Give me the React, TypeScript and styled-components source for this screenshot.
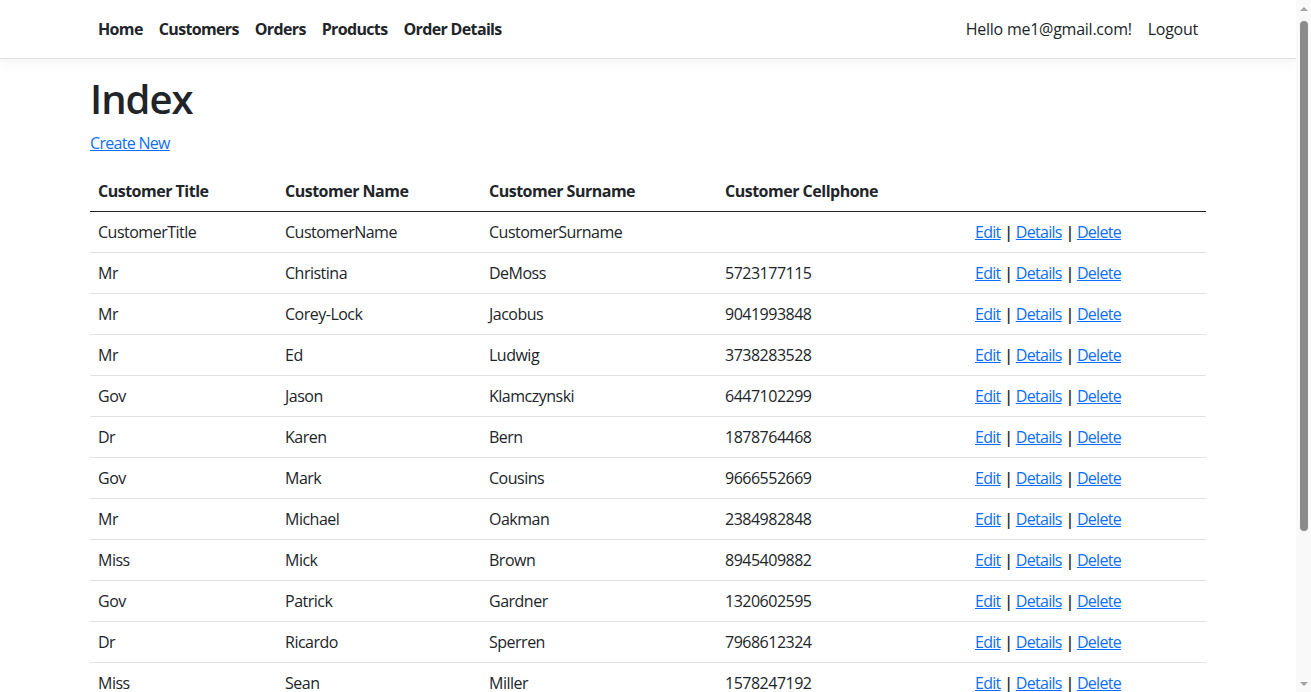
import React from "react";
import styled, { createGlobalStyle } from "styled-components";

const GlobalStyle = createGlobalStyle`
  html, body { margin: 0; padding: 0; overflow: hidden; }
  body {
    font-family: "Open Sans", "Noto Sans", sans-serif;
    font-size: 16px;
    line-height: 1.5;
    color: #212529;
    background: #fff;
  }
  * { box-sizing: border-box; }
`;

const Shell = styled.div`
  display: flex;
  height: 100vh;
  width: 100%;
  overflow: hidden;
`;

const Viewport = styled.div`
  flex: 1;
  min-width: 0;
  height: 100%;
  overflow: hidden;
`;

const ScrollBar = styled.div`
  width: 15px;
  flex: none;
  height: 100%;
  background: #f9f9f9;
  display: flex;
  flex-direction: column;
  align-items: center;
`;

const Arrow = styled.div<{ $down?: boolean }>`
  flex: none;
  height: 17px;
  width: 100%;
  display: flex;
  align-items: center;
  justify-content: center;
  &::before {
    content: "";
    width: 0;
    height: 0;
    border-left: 4px solid transparent;
    border-right: 4px solid transparent;
    ${(p) =>
      p.$down
        ? "border-top: 4px solid #a3a3a3;"
        : "border-bottom: 4px solid #a3a3a3;"}
  }
`;

const Track = styled.div`
  flex: 1;
  width: 100%;
  padding: 4px 3px 0;
`;

const Thumb = styled.div`
  width: 8px;
  margin: 0 auto;
  height: 510px;
  border-radius: 4px;
  background: #8b8b8b;
`;

const Header = styled.header`
  margin-bottom: 16px;
`;

const Navbar = styled.nav`
  height: 59px;
  background: #fff;
  border-bottom: 1px solid #dee2e6;
  box-shadow: 0 4px 12px rgba(0, 0, 0, 0.05);
  display: flex;
  align-items: center;
`;

const Container = styled.div`
  width: 1140px;
  margin: 0 auto;
  padding: 0 12px;
`;

const NavInner = styled(Container)`
  display: flex;
  align-items: center;
  justify-content: space-between;
`;

const NavList = styled.ul`
  display: flex;
  list-style: none;
  margin: 0;
  padding: 0;
  align-items: center;
`;

const NavLink = styled.a<{ $bold?: boolean }>`
  display: block;
  padding: 8px;
  color: #212529;
  text-decoration: none;
  font-weight: ${(p) => (p.$bold ? 700 : 400)};
  letter-spacing: ${(p) => (p.$bold ? "-0.65px" : "-0.25px")};
  cursor: pointer;
`;

const Title = styled.h1`
  font-size: 40px;
  font-weight: 600;
  line-height: 1.2;
  margin: 0 0 8px;
  letter-spacing: -1px;
`;

const Para = styled.p`
  margin: 0 0 16px;
`;

const Link = styled.a`
  color: #0d6efd;
  text-decoration: underline;
  letter-spacing: -0.7px;
  cursor: pointer;
`;

const Table = styled.table`
  width: 100%;
  border-collapse: collapse;
  margin-bottom: 16px;
`;

const Th = styled.th<{ $w?: number }>`
  text-align: left;
  font-weight: 700;
  padding: 8px;
  width: ${(p) => (p.$w ? `${p.$w}px` : "auto")};
  border-bottom: 1px solid #212529;
  letter-spacing: -0.5px;
`;

const Td = styled.td`
  padding: 8px;
  border-bottom: 1px solid #dee2e6;
  letter-spacing: -0.5px;
  white-space: nowrap;
`;

const Sep = styled.span`
  color: #212529;
  font-weight: 600;
  letter-spacing: -1px;
`;

const Footer = styled.footer`
  border-top: 1px solid #dee2e6;
  color: #6c757d;
  line-height: 60px;
  white-space: nowrap;
`;

type Row = [string, string, string, string];

const rows: Row[] = [
  ["CustomerTitle", "CustomerName", "CustomerSurname", ""],
  ["Mr", "Christina", "DeMoss", "5723177115"],
  ["Mr", "Corey-Lock", "Jacobus", "9041993848"],
  ["Mr", "Ed", "Ludwig", "3738283528"],
  ["Gov", "Jason", "Klamczynski", "6447102299"],
  ["Dr", "Karen", "Bern", "1878764468"],
  ["Gov", "Mark", "Cousins", "9666552669"],
  ["Mr", "Michael", "Oakman", "2384982848"],
  ["Miss", "Mick", "Brown", "8945409882"],
  ["Gov", "Patrick", "Gardner", "1320602595"],
  ["Dr", "Ricardo", "Sperren", "7968612324"],
  ["Miss", "Sean", "Miller", "1578247192"],
  ["Mr", "Thomas", "Walker", "6812340957"],
  ["Dr", "Tony", "Reeves", "4419027763"],
];

export default function App() {
  return (
    <>
      <GlobalStyle />
      <Shell>
        <Viewport>
          <Header>
            <Navbar>
              <NavInner>
                <NavList>
                  <li><NavLink $bold>Home</NavLink></li>
                  <li><NavLink $bold>Customers</NavLink></li>
                  <li><NavLink $bold>Orders</NavLink></li>
                  <li><NavLink $bold>Products</NavLink></li>
                  <li><NavLink $bold>Order Details</NavLink></li>
                </NavList>
                <NavList>
                  <li><NavLink>Hello me1@gmail.com!</NavLink></li>
                  <li><NavLink>Logout</NavLink></li>
                </NavList>
              </NavInner>
            </Navbar>
          </Header>
          <Container as="main">
            <Title>Index</Title>
            <Para>
              <Link>Create New</Link>
            </Para>
            <Table>
              <thead>
                <tr>
                  <Th $w={187}>Customer Title</Th>
                  <Th $w={204}>Customer Name</Th>
                  <Th $w={236}>Customer Surname</Th>
                  <Th $w={250}>Customer Cellphone</Th>
                  <Th></Th>
                </tr>
              </thead>
              <tbody>
                {rows.map((r, i) => (
                  <tr key={i}>
                    <Td>{r[0]}</Td>
                    <Td>{r[1]}</Td>
                    <Td>{r[2]}</Td>
                    <Td>{r[3]}</Td>
                    <Td>
                      <Link>Edit</Link> <Sep>|</Sep> <Link>Details</Link>{" "}
                      <Sep>|</Sep> <Link>Delete</Link>
                    </Td>
                  </tr>
                ))}
              </tbody>
            </Table>
          </Container>
          <Footer>
            <Container>
              &copy; 2024 - CustomerApp - <Link>Privacy</Link>
            </Container>
          </Footer>
        </Viewport>
        <ScrollBar aria-hidden="true">
          <Arrow />
          <Track>
            <Thumb />
          </Track>
          <Arrow $down />
        </ScrollBar>
      </Shell>
    </>
  );
}
